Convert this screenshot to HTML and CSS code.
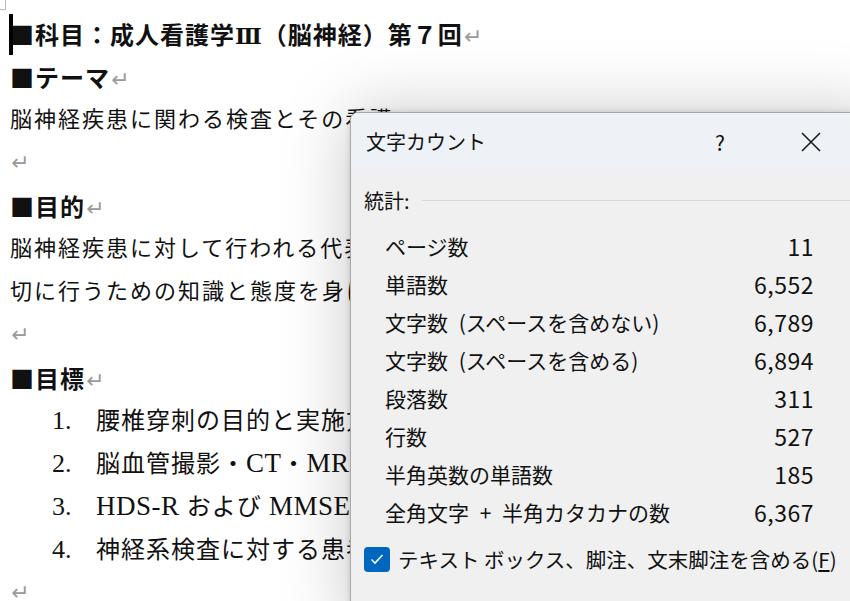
FILE: index.html
```html
<!DOCTYPE html>
<html lang="ja">
<head>
<meta charset="utf-8">
<link rel="stylesheet" href="styles.css">
</head>
<body>
<div class="page">
  <div class="corner"></div>
  <div class="doc">
    <p class="line head"><span class="caret"></span>■科目：成人看護学<span class="roman">Ⅲ</span>（脳神経）第７回<span class="ret">↵</span></p>
    <p class="line head">■テーマ<span class="ret">↵</span></p>
    <p class="line">脳神経疾患に関わる検査とその看護</p>
    <p class="line"><span class="ret">↵</span></p>
    <p class="line head">■目的<span class="ret">↵</span></p>
    <p class="line">脳神経疾患に対して行われる代表的な検査</p>
    <p class="line">切に行うための知識と態度を身につける</p>
    <p class="line"><span class="ret">↵</span></p>
    <p class="line head">■目標<span class="ret">↵</span></p>
    <ol class="goals">
      <li class="line"><span class="num">1.</span>腰椎穿刺の目的と実施方法</li>
      <li class="line"><span class="num">2.</span>脳血管撮影・<span class="lat">CT</span>・<span class="lat">MRI</span></li>
      <li class="line"><span class="num">3.</span><span class="lat">HDS-R </span>および<span class="lat"> MMSE</span></li>
      <li class="line"><span class="num">4.</span>神経系検査に対する患者</li>
    </ol>
    <p class="line"><span class="ret">↵</span></p>
  </div>

  <div class="dialog">
    <div class="titlebar">
      <span class="title">文字カウント</span>
      <span class="help">?</span>
      <span class="close"><svg width="22" height="22" viewBox="0 0 22 22"><path d="M2 2 L20 20 M20 2 L2 20" stroke="#1a1a1a" stroke-width="1.6" fill="none"/></svg></span>
    </div>
    <div class="content">
      <div class="group"><span>統計:</span><span class="rule"></span></div>
      <div class="stats">
        <div class="row"><span>ページ数</span><span class="val">11</span></div>
        <div class="row"><span>単語数</span><span class="val">6,552</span></div>
        <div class="row"><span>文字数 (スペースを含めない)</span><span class="val">6,789</span></div>
        <div class="row"><span>文字数 (スペースを含める)</span><span class="val">6,894</span></div>
        <div class="row"><span>段落数</span><span class="val">311</span></div>
        <div class="row"><span>行数</span><span class="val">527</span></div>
        <div class="row"><span>半角英数の単語数</span><span class="val">185</span></div>
        <div class="row"><span>全角文字 + 半角カタカナの数</span><span class="val">6,367</span></div>
      </div>
      <div class="check">
        <span class="box"><svg width="14" height="12" viewBox="0 0 14 12"><path d="M1.5 6.5 L5 10 L12.5 2" stroke="#fff" stroke-width="1.6" fill="none"/></svg></span>
        <span>テキスト ボックス、脚注、文末脚注を含める(<u>F</u>)</span>
      </div>
    </div>
  </div>
</div>
</body>
</html>
```

FILE: styles.css
```css
html, body {
  margin: 0;
  padding: 0;
  background: #fff;
  overflow: hidden;
}
.page {
  position: relative;
  width: 850px;
  height: 601px;
  overflow: hidden;
  background: #fff;
}
.corner {
  position: absolute;
  left: 0;
  top: 0;
  width: 5px;
  height: 9px;
  border-right: 1px solid #bbb;
  border-bottom: 1px solid #bbb;
}
.doc {
  padding: 12px 0 0 10px;
  font-family: "Liberation Serif", "Noto Sans CJK JP", serif;
  color: #111;
}
.line {
  margin: 0;
  height: 43px;
  line-height: 43px;
  font-size: 22px;
  letter-spacing: 2px;
  white-space: nowrap;
}
.head {
  font-family: "Noto Sans CJK JP", sans-serif;
  font-weight: bold;
  font-size: 24px;
  letter-spacing: 1px;
  position: relative;
}
.roman {
  font-family: "DejaVu Serif", "Liberation Serif", serif;
  font-weight: bold;
  font-size: 22px;
}
.caret {
  position: absolute;
  left: -1px;
  top: 2px;
  width: 4px;
  height: 41px;
  background: #000;
}
.ret {
  font-family: "DejaVu Sans", sans-serif;
  color: #9a9a9a;
  font-weight: normal;
  font-size: 22px;
  letter-spacing: 0;
  margin-left: 1px;
}
.goals {
  list-style: none;
  margin: 0;
  padding: 0 0 0 42px;
}
.goals .line {
  font-size: 24px;
  letter-spacing: 1px;
}
.lat {
  font-size: 27px;
  letter-spacing: 0.5px;
}
.num {
  display: inline-block;
  width: 44px;
  font-size: 26px;
  letter-spacing: 0;
}
.dialog {
  position: absolute;
  left: 350px;
  top: 112px;
  width: 530px;
  height: 520px;
  border: 1px solid #a8a8a8;
  border-radius: 8px;
  background: #f0f0f0;
  box-shadow: 0 0 70px rgba(0, 0, 0, 0.22), 0 0 6px rgba(0, 0, 0, 0.15);
  font-family: "Noto Sans CJK JP", "Noto Sans", sans-serif;
  color: #111;
  overflow: hidden;
}
.titlebar {
  height: 57px;
  background: #eef2f6;
  display: flex;
  align-items: center;
  padding-left: 15px;
  font-size: 20px;
}
.title {
  flex: 1;
}
.help {
  width: 28px;
  font-size: 21px;
  margin-right: 57px;
}
.close {
  display: flex;
  width: 81px;
}
.content {
  padding: 14px 0 0 13px;
  font-size: 20px;
}
.group {
  display: flex;
  align-items: center;
  height: 32px;
}
.rule {
  flex: 1;
  height: 1px;
  background: #d8d8d8;
  margin-left: 12px;
}
.stats {
  margin: 11px 0 0 21px;
  width: 428px;
  font-size: 21px;
  word-spacing: 6px;
}
.row {
  display: flex;
  justify-content: space-between;
  height: 38px;
  line-height: 38px;
}
.val {
  font-size: 23px;
  letter-spacing: 0.5px;
  margin-right: -1px;
}
.check {
  display: flex;
  align-items: center;
  margin-top: 8px;
  height: 40px;
  font-size: 20.5px;
}
.box {
  width: 26px;
  height: 25px;
  border-radius: 4px;
  background: #0067c0;
  display: flex;
  align-items: center;
  justify-content: center;
  margin-right: 8px;
}
```
